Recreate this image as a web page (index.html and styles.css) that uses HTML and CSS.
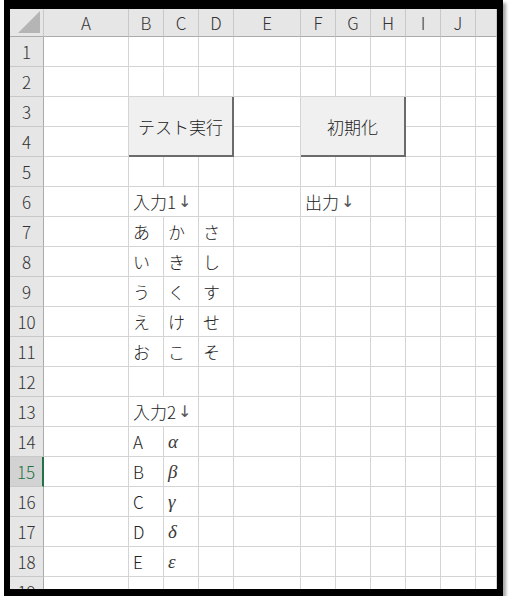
FILE: index.html
```html
<!DOCTYPE html>
<html lang="ja">
<head>
<meta charset="utf-8">
<title>Sheet</title>
<link rel="stylesheet" href="styles.css">
</head>
<body>
<div class="frame">
  <div class="sheet">
    <!-- header row -->
    <div class="corner"><svg width="22" height="22" viewBox="0 0 22 22"><polygon points="22,0 22,22 0,22" fill="#b5b5b5"/></svg></div>
    <div class="ch">A</div><div class="ch">B</div><div class="ch">C</div><div class="ch">D</div><div class="ch">E</div>
    <div class="ch">F</div><div class="ch">G</div><div class="ch">H</div><div class="ch">I</div><div class="ch">J</div><div class="ch"></div>

    <!-- 1 -->
    <div class="rh">1</div>
    <div class="c"></div><div class="c"></div><div class="c"></div><div class="c"></div><div class="c"></div><div class="c"></div><div class="c"></div><div class="c"></div><div class="c"></div><div class="c"></div><div class="c"></div>
    <!-- 2 -->
    <div class="rh">2</div>
    <div class="c"></div><div class="c"></div><div class="c"></div><div class="c"></div><div class="c"></div><div class="c"></div><div class="c"></div><div class="c"></div><div class="c"></div><div class="c"></div><div class="c"></div>
    <!-- 3 -->
    <div class="rh">3</div>
    <div class="c"></div>
    <div class="btn">テスト実行</div>
    <div class="c"></div>
    <div class="btn">初期化</div>
    <div class="c"></div><div class="c"></div><div class="c"></div>
    <!-- 4 -->
    <div class="rh">4</div>
    <div class="c"></div><div class="c"></div><div class="c"></div><div class="c"></div><div class="c"></div>
    <!-- 5 -->
    <div class="rh">5</div>
    <div class="c"></div><div class="c"></div><div class="c"></div><div class="c"></div><div class="c"></div><div class="c"></div><div class="c"></div><div class="c"></div><div class="c"></div><div class="c"></div><div class="c"></div>
    <!-- 6 -->
    <div class="rh">6</div>
    <div class="c"></div><div class="c span2">入力1<span class="arrow">↓</span></div><div class="c"></div><div class="c"></div><div class="c span2">出力<span class="arrow">↓</span></div><div class="c"></div><div class="c"></div><div class="c"></div><div class="c"></div>
    <!-- 7 -->
    <div class="rh">7</div>
    <div class="c"></div><div class="c">あ</div><div class="c">か</div><div class="c">さ</div><div class="c"></div><div class="c"></div><div class="c"></div><div class="c"></div><div class="c"></div><div class="c"></div><div class="c"></div>
    <!-- 8 -->
    <div class="rh">8</div>
    <div class="c"></div><div class="c">い</div><div class="c">き</div><div class="c">し</div><div class="c"></div><div class="c"></div><div class="c"></div><div class="c"></div><div class="c"></div><div class="c"></div><div class="c"></div>
    <!-- 9 -->
    <div class="rh">9</div>
    <div class="c"></div><div class="c">う</div><div class="c">く</div><div class="c">す</div><div class="c"></div><div class="c"></div><div class="c"></div><div class="c"></div><div class="c"></div><div class="c"></div><div class="c"></div>
    <!-- 10 -->
    <div class="rh">10</div>
    <div class="c"></div><div class="c">え</div><div class="c">け</div><div class="c">せ</div><div class="c"></div><div class="c"></div><div class="c"></div><div class="c"></div><div class="c"></div><div class="c"></div><div class="c"></div>
    <!-- 11 -->
    <div class="rh">11</div>
    <div class="c"></div><div class="c">お</div><div class="c">こ</div><div class="c">そ</div><div class="c"></div><div class="c"></div><div class="c"></div><div class="c"></div><div class="c"></div><div class="c"></div><div class="c"></div>
    <!-- 12 -->
    <div class="rh">12</div>
    <div class="c"></div><div class="c"></div><div class="c"></div><div class="c"></div><div class="c"></div><div class="c"></div><div class="c"></div><div class="c"></div><div class="c"></div><div class="c"></div><div class="c"></div>
    <!-- 13 -->
    <div class="rh">13</div>
    <div class="c"></div><div class="c span2">入力2<span class="arrow">↓</span></div><div class="c"></div><div class="c"></div><div class="c"></div><div class="c"></div><div class="c"></div><div class="c"></div><div class="c"></div><div class="c"></div>
    <!-- 14 -->
    <div class="rh">14</div>
    <div class="c"></div><div class="c">A</div><div class="c greek">α</div><div class="c"></div><div class="c"></div><div class="c"></div><div class="c"></div><div class="c"></div><div class="c"></div><div class="c"></div><div class="c"></div>
    <!-- 15 -->
    <div class="rh active">15</div>
    <div class="c"></div><div class="c">B</div><div class="c greek">β</div><div class="c"></div><div class="c"></div><div class="c"></div><div class="c"></div><div class="c"></div><div class="c"></div><div class="c"></div><div class="c"></div>
    <!-- 16 -->
    <div class="rh">16</div>
    <div class="c"></div><div class="c">C</div><div class="c greek">γ</div><div class="c"></div><div class="c"></div><div class="c"></div><div class="c"></div><div class="c"></div><div class="c"></div><div class="c"></div><div class="c"></div>
    <!-- 17 -->
    <div class="rh">17</div>
    <div class="c"></div><div class="c">D</div><div class="c greek">δ</div><div class="c"></div><div class="c"></div><div class="c"></div><div class="c"></div><div class="c"></div><div class="c"></div><div class="c"></div><div class="c"></div>
    <!-- 18 -->
    <div class="rh">18</div>
    <div class="c"></div><div class="c">E</div><div class="c greek">ε</div><div class="c"></div><div class="c"></div><div class="c"></div><div class="c"></div><div class="c"></div><div class="c"></div><div class="c"></div><div class="c"></div>
    <!-- 19 -->
    <div class="rh">19</div>
    <div class="c"></div><div class="c"></div><div class="c"></div><div class="c"></div><div class="c"></div><div class="c"></div><div class="c"></div><div class="c"></div><div class="c"></div><div class="c"></div><div class="c"></div>
  </div>
</div>
</body>
</html>
```

FILE: styles.css
```css
html, body {
  margin: 0;
  padding: 0;
  background: #ffffff;
}

.frame {
  margin-left: 4px;
  width: 487px;
  height: 580px;
  border-style: solid;
  border-color: #000000;
  border-width: 9px 6px 7px 6px;
  box-shadow: 3px 3px 3px rgba(0, 0, 0, 0.35);
  overflow: hidden;
}

.sheet {
  display: grid;
  grid-template-columns: 34px 85px 35px 35px 35px 67px 35px 35px 35px 35px 35px 21px;
  grid-template-rows: 28px repeat(19, 30px);
  height: 580px;
  overflow: hidden;
  font-family: "Noto Sans CJK JP", "Noto Sans", sans-serif;
  font-size: 17px;
  font-weight: 300;
  color: #222222;
  background: #ffffff;
}

.corner {
  background: #e6e6e6;
  border-right: 1px solid #c8c8c8;
  border-bottom: 1px solid #ababab;
  display: flex;
  align-items: flex-end;
  justify-content: flex-end;
  padding: 0 3px 3px 0;
  box-sizing: border-box;
}

.corner svg {
  display: block;
}

.ch {
  background: #e6e6e6;
  border-right: 1px solid #c8c8c8;
  border-bottom: 1px solid #ababab;
  box-sizing: border-box;
  display: flex;
  align-items: center;
  justify-content: center;
  color: #333333;
  line-height: 1;
}

.rh {
  background: #e6e6e6;
  border-right: 1px solid #ababab;
  border-bottom: 1px solid #c8c8c8;
  box-sizing: border-box;
  display: flex;
  align-items: center;
  justify-content: center;
  color: #333333;
  line-height: 1;
}

.rh.active {
  background: #d2d2d2;
  color: #217346;
  border-right: 2px solid #217346;
}

.c {
  border-right: 1px solid #d4d4d4;
  border-bottom: 1px solid #d4d4d4;
  box-sizing: border-box;
  display: flex;
  align-items: center;
  padding-left: 4px;
  white-space: nowrap;
  line-height: 1;
}

.arrow {
  font-family: "DejaVu Sans", sans-serif;
  font-weight: normal;
  font-size: 16px;
  color: #555555;
  margin-left: 2px;
}

.span2 {
  grid-column: span 2;
}

.greek {
  font-family: "Liberation Serif", "DejaVu Serif", serif;
  font-style: italic;
  font-weight: normal;
  font-size: 19px;
  color: #3a3a3a;
  padding-left: 4px;
}

.btn {
  grid-column: span 3;
  grid-row: span 2;
  background: #f0f0f0;
  border-right: 2px solid #6b6b6b;
  border-bottom: 2px solid #6b6b6b;
  box-sizing: border-box;
  display: flex;
  align-items: center;
  justify-content: center;
  color: #222222;
  font-size: 17px;
  line-height: 1;
  position: relative;
  z-index: 1;
}
```
